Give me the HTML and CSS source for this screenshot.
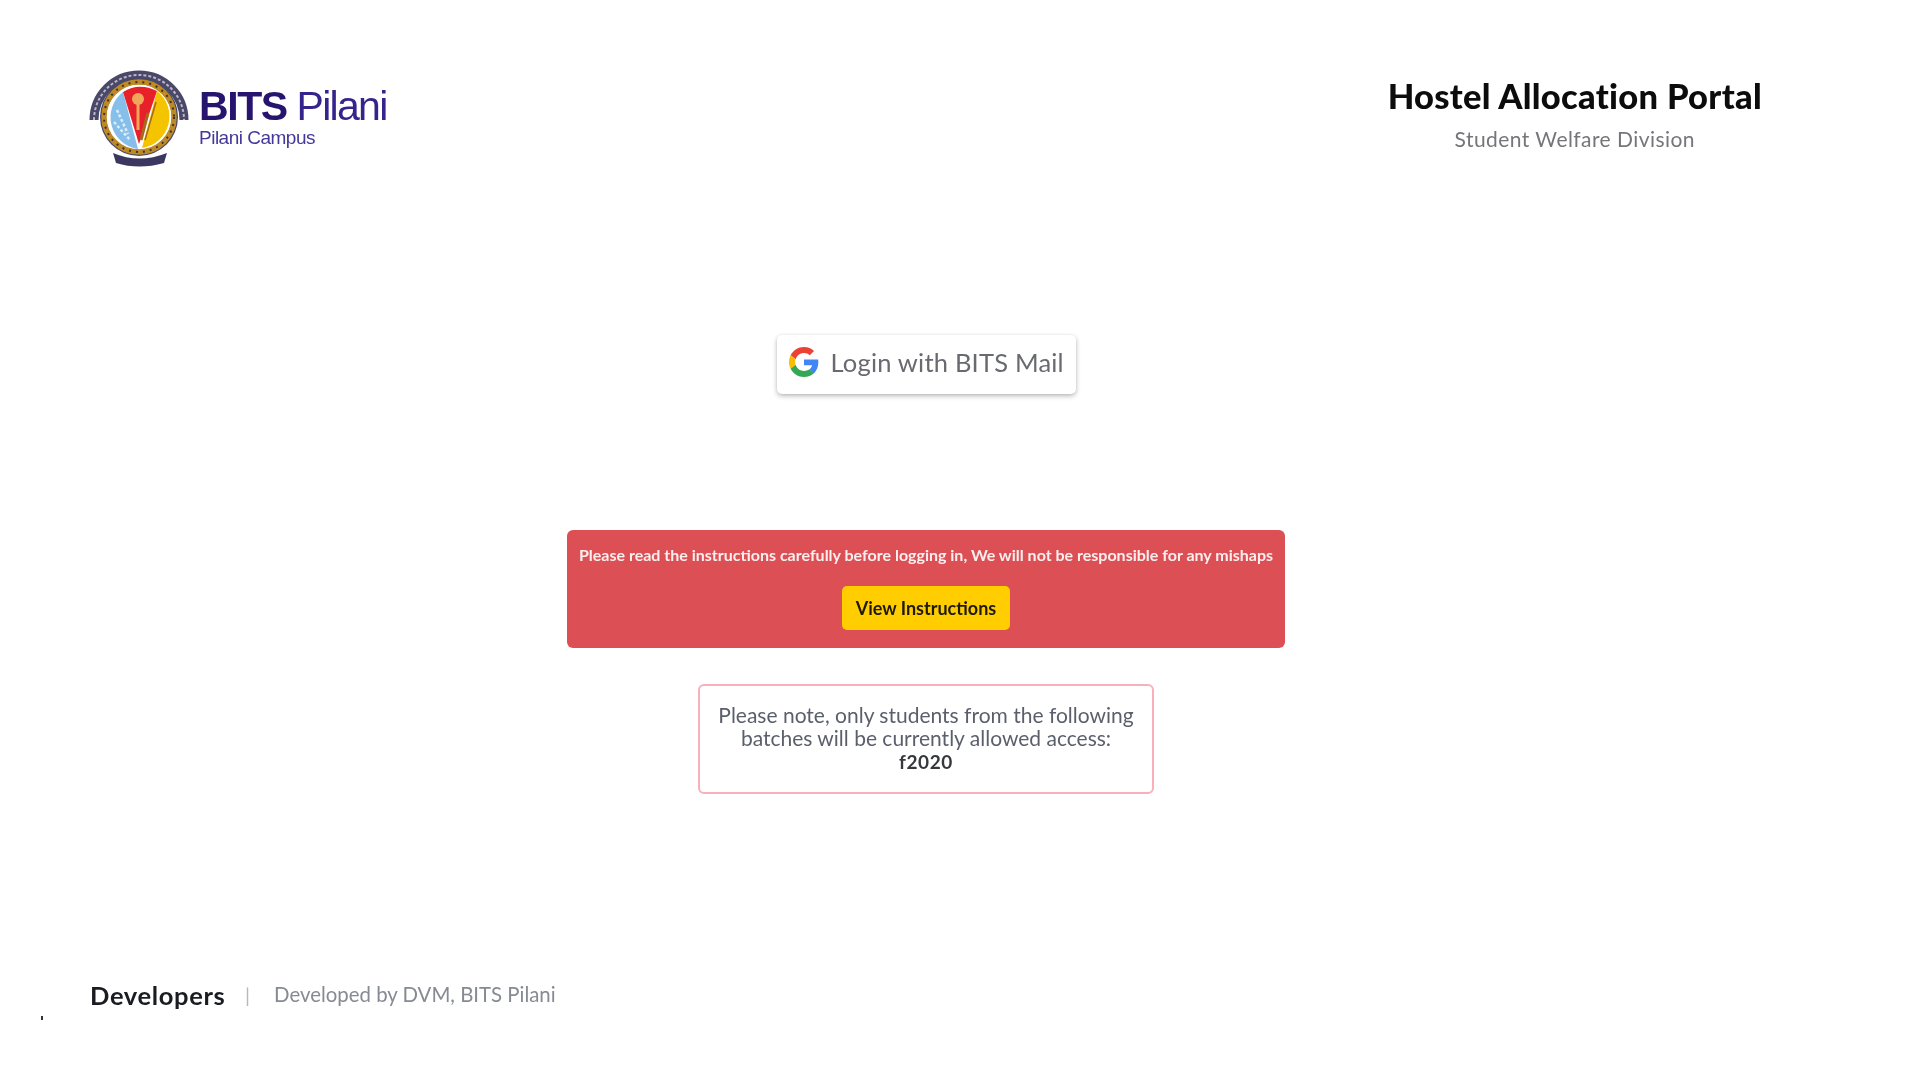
FILE: index.html
```html
<!DOCTYPE html>
<html lang="en">
<head>
<meta charset="utf-8">
<title>Hostel Allocation Portal</title>
<link rel="stylesheet" href="styles.css">
</head>
<body>
<div class="page">
  <header class="header">
    <div class="logo">
      <svg class="emblem" viewBox="0 0 102 102" width="102" height="102" aria-hidden="true">
        <path d="M6 52 A45 45 0 0 1 96 52" fill="none" stroke="#4a4868" stroke-width="9"/>
        <path d="M6 52 A45 45 0 0 1 96 52" fill="none" stroke="#b9b6c8" stroke-width="2" stroke-dasharray="3 2"/>
        <circle cx="51" cy="49" r="39" fill="#4a4868"/>
        <circle cx="51" cy="49" r="37" fill="#fff"/>
        <circle cx="51" cy="49" r="35" fill="none" stroke="#bd8a26" stroke-width="5.5"/>
        <circle cx="51" cy="49" r="35" fill="none" stroke="#3e3226" stroke-width="2" stroke-dasharray="2 5"/>
        <circle cx="51" cy="49" r="32" fill="#fff"/>
        <path d="M35 24 A32 32 0 0 0 50 81 Z" fill="#86bfe9"/>
        <path d="M35 24 Q51 14 69 23 L51 76 Z" fill="#e8202a"/>
        <path d="M69 23 A32 32 0 0 1 54 80 Z" fill="#f5c400"/>
        <path d="M60 45 L53 72" stroke="#a5691c" stroke-width="3"/>
        <path d="M68 34 L57 72" stroke="#a5691c" stroke-width="1.5"/>
        <circle cx="50" cy="31" r="6" fill="#f2a65a"/>
        <path d="M50 36 L50 62" stroke="#f2a65a" stroke-width="3"/>
        <path d="M29 42 L40 66 M26 54 L42 72" stroke="#dcecf8" stroke-width="2.5" stroke-dasharray="3 2"/>
        <path d="M25 85 Q51 96 79 85 L76 95 Q51 102 28 95 Z" fill="#3a3760"/>
      </svg>
      <div class="brand">
        <div class="brand-name"><b>BITS</b> Pilani</div>
        <div class="brand-campus">Pilani Campus</div>
      </div>
    </div>
    <div class="titles">
      <h1 class="title">Hostel Allocation Portal</h1>
      <p class="subtitle">Student Welfare Division</p>
    </div>
  </header>

  <main class="main">
    <button class="login" type="button">
      <svg class="g-icon" viewBox="0 0 48 48" width="30" height="30" aria-hidden="true">
        <path fill="#EA4335" d="M24 9.5c3.54 0 6.71 1.22 9.21 3.6l6.85-6.85C35.9 2.38 30.47 0 24 0 14.62 0 6.51 5.38 2.56 13.22l7.98 6.19C12.43 13.72 17.74 9.5 24 9.5z"/>
        <path fill="#4285F4" d="M46.98 24.55c0-1.57-.15-3.09-.38-4.55H24v9.02h12.94c-.58 2.96-2.26 5.48-4.78 7.18l7.73 6c4.51-4.18 7.09-10.36 7.09-17.65z"/>
        <path fill="#FBBC05" d="M10.53 28.59c-.48-1.45-.76-2.99-.76-4.59s.27-3.14.76-4.59l-7.98-6.19C.92 16.46 0 20.12 0 24c0 3.88.92 7.54 2.56 10.78l7.97-6.19z"/>
        <path fill="#34A853" d="M24 48c6.48 0 11.93-2.13 15.89-5.81l-7.73-6c-2.15 1.45-4.92 2.3-8.16 2.3-6.26 0-11.57-4.22-13.47-9.91l-7.98 6.19C6.51 42.62 14.62 48 24 48z"/>
      </svg>
      <span>Login with BITS Mail</span>
    </button>

    <section class="alert">
      <p class="alert-text">Please read the instructions carefully before logging in, We will not be responsible for any mishaps</p>
      <button class="instructions" type="button">View Instructions</button>
    </section>

    <section class="note">
      <p class="note-text">Please note, only students from the following batches will be currently allowed access:</p>
      <p class="batch">f2020</p>
    </section>
  </main>

  <footer class="footer">
    <span class="dev-link">Developers</span>
    <span class="sep">|</span>
    <span class="credit">Developed by DVM, BITS Pilani</span>
  </footer>
  <i class="speck"></i>
</div>
</body>
</html>
```
FILE: styles.css
```css
* { box-sizing: border-box; }
html, body { margin: 0; height: 100%; background: #fff; }
body { font-family: "Lato", "Noto Sans", sans-serif; overflow: hidden; }
p, h1 { margin: 0; }
button { font: inherit; border: 0; cursor: pointer; }

.page {
  position: relative;
  height: 1080px;
  display: flex;
  flex-direction: column;
  padding: 68px 68px 0 0;
  filter: blur(0.75px);
}

.header {
  display: flex;
  justify-content: space-between;
  align-items: flex-start;
  padding: 0 90px 0 88px;
}
.logo { display: flex; align-items: center; gap: 9px; }
.emblem { flex: none; }
.brand { display: flex; flex-direction: column; font-family: "Liberation Sans", sans-serif; margin-top: -6px; }
.brand-name { font-size: 41px; line-height: 44px; letter-spacing: -1.7px; color: #35248c; }
.brand-name b { color: #26146f; letter-spacing: -1.4px; }
.brand-campus { font-size: 19px; line-height: 20px; letter-spacing: -0.5px; color: #44389a; }

.titles { text-align: center; padding-top: 7px; }
.title { font-size: 34.5px; line-height: 42px; font-weight: 900; letter-spacing: .3px; color: #0c0c0c; }
.subtitle { font-size: 21px; line-height: 26px; letter-spacing: .45px; color: #75757a; margin-top: 9px; }

.main { display: flex; flex-direction: column; align-items: center; margin-top: 165px; }

.login {
  display: flex;
  align-items: center;
  gap: 12px;
  height: 59px;
  width: 299px;
  padding: 0 12px 6px;
  background: #fff;
  border-radius: 5px;
  color: #686a70;
  font-size: 25.5px;
  letter-spacing: .2px;
  white-space: nowrap;
  box-shadow: 0 2px 5px rgba(0,0,0,.28), 0 0 3px rgba(0,0,0,.06);
}
.g-icon { flex: none; }

.alert {
  margin-top: 136px;
  width: 718px;
  height: 118px;
  background: #dc5055;
  border-radius: 6px;
  display: flex;
  flex-direction: column;
  align-items: center;
  padding-top: 16px;
}
.alert-text { font-size: 16px; line-height: 18px; font-weight: 700; color: #fbeeee; white-space: nowrap; }
.instructions {
  margin-top: 22px;
  padding-bottom: 2px;
  width: 168px;
  height: 44px;
  background: #ffcd00;
  border-radius: 5px;
  color: #1f1a05;
  font-size: 18px;
  font-weight: 700;
}

.note {
  margin-top: 36px;
  width: 456px;
  height: 110px;
  border: 2px solid #f8b0bb;
  border-radius: 6px;
  padding: 17px 14px 0;
  text-align: center;
  color: #5a5f6b;
  font-size: 21px;
  line-height: 23.4px;
}
.batch { font-size: 19px; font-weight: 700; color: #36383d; letter-spacing: .6px; }

.footer {
  margin-top: auto;
  margin-bottom: 70px;
  padding-left: 90px;
  display: flex;
  align-items: center;
}
.dev-link { font-size: 25.5px; line-height: 30px; font-weight: 700; letter-spacing: .65px; color: #1a1c21; width: 135px; white-space: nowrap; }
.sep { color: #b5b8bd; font-size: 20px; margin-left: 20px; }
.credit { font-size: 20.4px; line-height: 24px; color: #868a92; margin-left: 24px; padding-bottom: 3px; }

.speck { position: absolute; left: 41px; top: 1016px; width: 2px; height: 4px; background: #333; }
```
